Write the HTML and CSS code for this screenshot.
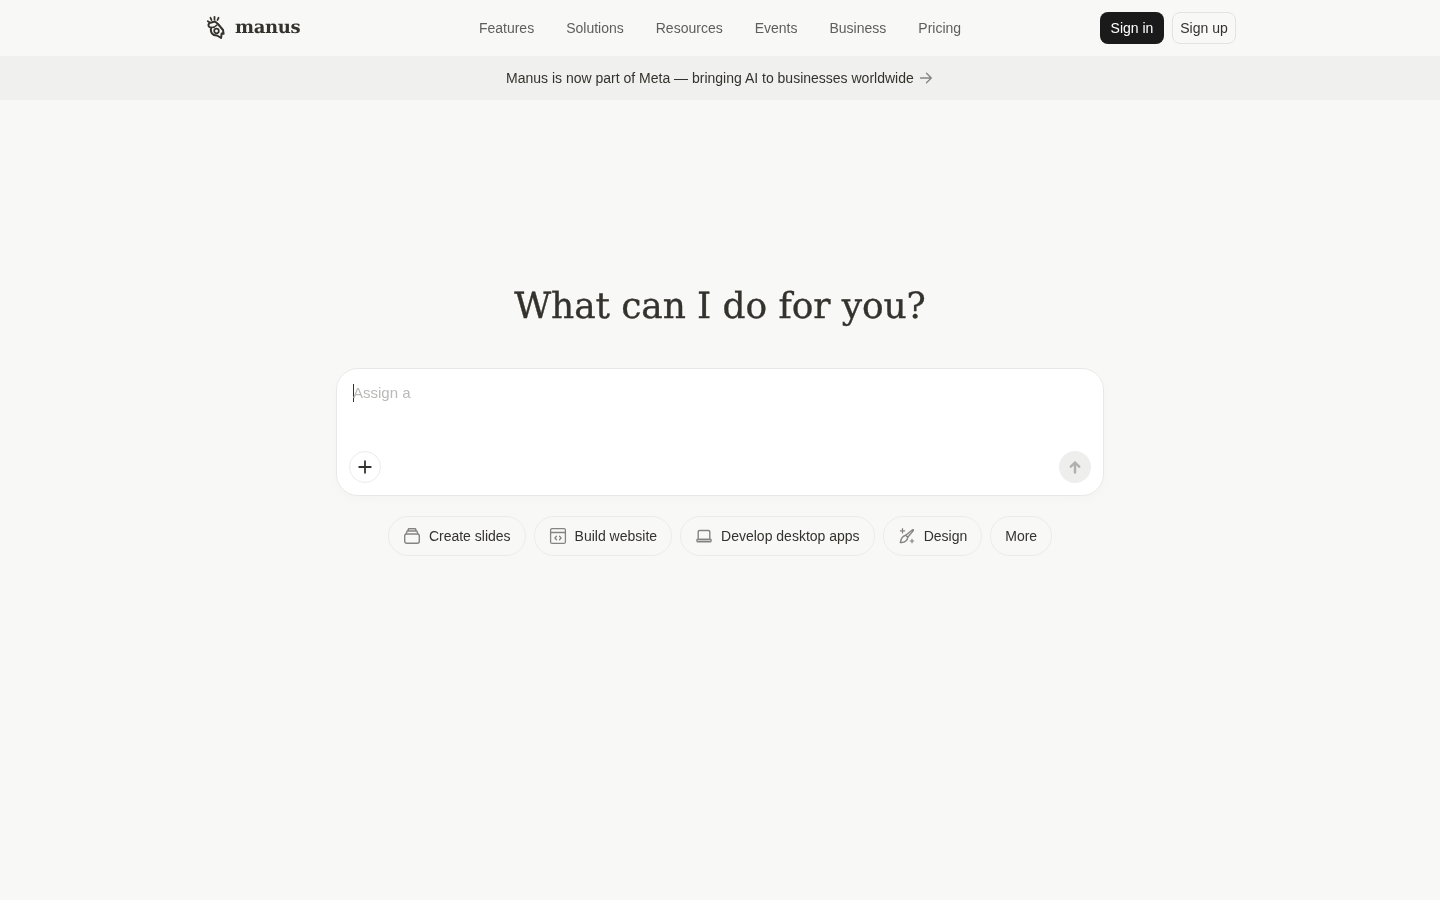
FILE: index.html
```html
<!DOCTYPE html>
<html lang="en">
<head>
<meta charset="utf-8">
<title>Manus</title>
<link rel="stylesheet" href="styles.css">
</head>
<body>
<header class="topbar">
  <div class="topbar-inner">
    <a class="brand" href="#">
      <svg class="brand-mark" viewBox="0 0 20 26" width="20" height="26" fill="none" stroke="#34322d" stroke-linecap="round" stroke-linejoin="round">
        <path d="M4.500 2.800 5.500 5M8.500 1.800V4.500M12.500 2.800 11.500 5M1.800 6.200 3.500 7.200" stroke-width="1.800"/>
        <path d="M3.500 8 9 6.500l3 2.500 5 6 .6 3.800-2-.2-.5 4.400-4-2.500C7 20.800 4 18 5 12.500 2.500 12.500 1.500 10 3.500 8z" stroke-width="2"/>
        <path d="M5 12.500c2 .3 4-.5 6-2.500" stroke-width="1.600"/>
        <circle cx="10.500" cy="16" r="2.300" stroke-width="1.700"/>
      </svg>
      <span class="brand-name">manus</span>
    </a>
    <nav class="main-nav">
      <a href="#">Features</a>
      <a href="#">Solutions</a>
      <a href="#">Resources</a>
      <a href="#">Events</a>
      <a href="#">Business</a>
      <a href="#">Pricing</a>
    </nav>
    <div class="auth">
      <a class="btn btn-dark" href="#">Sign in</a>
      <a class="btn btn-light" href="#">Sign up</a>
    </div>
  </div>
</header>
<div class="announce">
  <span class="announce-text">Manus is now part of Meta — bringing AI to businesses worldwide</span>
  <svg viewBox="0 0 16 16" width="16" height="16" fill="none" stroke="#858481" stroke-width="1.300" stroke-linecap="round" stroke-linejoin="round"><path d="M2.500 8h10.500M8.500 3.200 13.300 8l-4.800 4.800"/></svg>
</div>
<main class="hero">
  <h1>What can I do for you?</h1>
  <section class="composer">
    <div class="prompt"><span class="caret"></span><span class="placeholder">Assign a</span></div>
    <div class="composer-actions">
      <button class="round add" aria-label="Add">
        <svg viewBox="0 0 16 16" width="16" height="16" fill="none" stroke="#34322d" stroke-width="1.800" stroke-linecap="round"><path d="M8 2.200v11.600M2.200 8h11.600"/></svg>
      </button>
      <button class="round send" aria-label="Send">
        <svg viewBox="0 0 16 16" width="16" height="16" fill="none" stroke="#b0b0ae" stroke-width="2.400" stroke-linecap="round" stroke-linejoin="round"><path d="M8 13.500V3.500M3.800 7.700 8 3.500l4.200 4.200"/></svg>
      </button>
    </div>
  </section>
  <div class="chips">
    <a class="chip" href="#">
      <svg viewBox="-1 -1 18 18" width="18" height="18" fill="none" stroke="#858481" stroke-width="1.400" stroke-linejoin="round"><rect x=".7" y="6" width="14.600" height="9.300" rx="2"/><path d="M2 6 3.200 3h9.600L14 6M3.800 3l.7-2.300h7L12.200 3"/></svg>
      <span>Create slides</span>
    </a>
    <a class="chip" href="#">
      <svg viewBox="-1 -1 18 18" width="18" height="18" fill="none" stroke="#858481" stroke-width="1.300" stroke-linecap="round" stroke-linejoin="round"><rect x=".6" y=".6" width="14.800" height="14.800" rx="1.500"/><path d="M.6 4.500h14.800M6.500 8.200 4.900 10l1.600 1.800M9.500 8.200l1.600 1.800-1.600 1.800"/></svg>
      <span>Build website</span>
    </a>
    <a class="chip" href="#">
      <svg viewBox="-1 -1 18 18" width="18" height="18" fill="none" stroke="#858481" stroke-width="1.400" stroke-linejoin="round"><rect x="2.200" y="2.500" width="11.600" height="9" rx="1.200"/><path d="M1 11.500h14v1.500a.8.8 0 0 1-.8.8H1.800a.8.8 0 0 1-.8-.8z"/></svg>
      <span>Develop desktop apps</span>
    </a>
    <a class="chip" href="#">
      <svg viewBox="-1 -1 18 18" width="18" height="18" fill="none" stroke="#858481" stroke-width="1.400" stroke-linecap="round" stroke-linejoin="round"><path d="M13.500 1.800c.6-.4 1.200.2.800.8L8.700 9.200 6.800 7.300z"/><path d="M6.800 7.300C4.500 7.700 3.300 9 2.500 10.500l-1.200 4c1.800.2 4.300-.2 5.800-1.700 1-.9 1.500-2.100 1.600-3.600"/><path d="M3.500.6v4.400M1.300 2.800h4.400M13 11.300v3.400M11.300 13h3.400" stroke-width="1.200"/></svg>
      <span>Design</span>
    </a>
    <a class="chip" href="#"><span>More</span></a>
  </div>
</main>
</body>
</html>
```

FILE: styles.css
```css
* { box-sizing: border-box; }
html, body { margin: 0; height: 100%; }
body {
  background: #f8f8f7;
  color: #34322d;
  font-family: "Liberation Sans", Arial, sans-serif;
  font-size: 14px;
  min-height: 900px;
}
a { color: inherit; text-decoration: none; }
.topbar { height: 56px; }
.topbar-inner {
  width: 1040px;
  height: 100%;
  margin: 0 auto;
  padding: 0 4px;
  display: grid;
  grid-template-columns: 1fr auto 1fr;
  align-items: center;
  will-change: transform;
}
.brand { display: flex; align-items: center; gap: 9px; justify-self: start; margin-left: 2px; }
.brand-mark { display: block; }
.brand-name {
  font-family: "DejaVu Serif", serif;
  font-weight: 700;
  font-size: 18px;
  letter-spacing: -.35px;
  color: #34322d;
  position: relative;
  top: -1px;
  text-rendering: geometricPrecision;
}
.main-nav { display: flex; gap: 32px; color: #5e5e5b; }
.main-nav a { line-height: 20px; }
.auth { display: flex; gap: 8px; justify-self: end; }
.btn {
  height: 32px;
  display: flex;
  align-items: center;
  justify-content: center;
  border-radius: 8px;
  line-height: 20px;
}
.btn-dark { width: 64px; background: #1a1a1a; color: #fff; }
.btn-light { width: 64px; border: 1px solid #e2e2df; color: #34322d; }
.announce {
  height: 44px;
  background: #f0f0ee;
  display: flex;
  align-items: center;
  justify-content: center;
  gap: 4px;
  color: #34322d;
}
.announce svg { display: block; }
.announce-text { will-change: transform; }
.hero {
  display: flex;
  flex-direction: column;
  align-items: center;
  padding-top: 182px;
  will-change: transform;
}
h1 {
  margin: 0 0 36px;
  font-family: "DejaVu Serif", "Liberation Serif", serif;
  font-weight: 400;
  font-size: 36px;
  letter-spacing: -.1px;
  line-height: 50px;
  color: #34322d;
  -webkit-text-stroke: .35px #34322d;
  text-rendering: geometricPrecision;
}
.composer {
  width: 768px;
  height: 128px;
  padding: 12px;
  background: #fff;
  border: 1px solid #e8e8e6;
  border-radius: 22px;
  box-shadow: 0 4px 12px rgba(0,0,0,.02);
  display: flex;
  flex-direction: column;
  justify-content: space-between;
}
.prompt {
  padding: 3px 4px 0;
  display: flex;
  align-items: flex-start;
  font-size: 15px;
  line-height: 18px;
  height: 21px;
}
.caret { width: 1px; height: 18px; margin-right: -1px; background: #34322d; }
.placeholder { color: #b9b9b7; line-height: 18px; }
.composer-actions { display: flex; justify-content: space-between; align-items: center; }
.round {
  width: 32px;
  height: 32px;
  padding: 0;
  border-radius: 50%;
  display: flex;
  align-items: center;
  justify-content: center;
  background: #fff;
  border: 1px solid #ececea;
}
.send { background: #eeeeec; border: 0; }
.chips { display: flex; gap: 8px; margin-top: 20px; }
.chip {
  height: 40px;
  padding: 0 14px;
  display: flex;
  align-items: center;
  gap: 8px;
  border: 1px solid #ebebe9;
  border-radius: 20px;
  color: #34322d;
  line-height: 20px;
}
.chip svg { display: block; }
```
